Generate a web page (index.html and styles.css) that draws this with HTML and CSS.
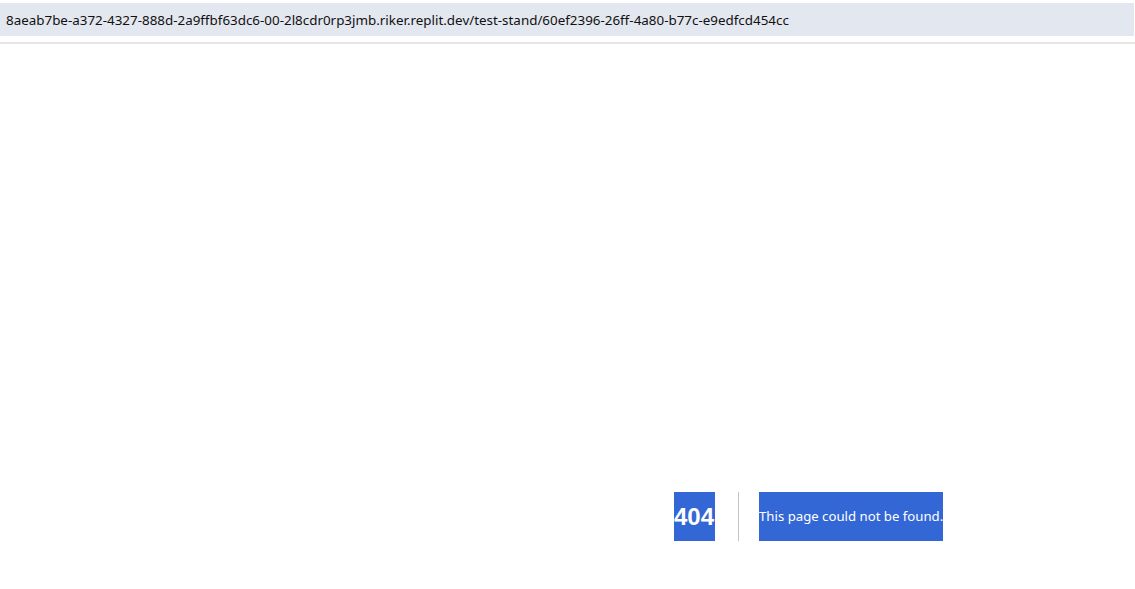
FILE: index.html
```html
<!DOCTYPE html>
<html>
<head>
<meta charset="utf-8">
<link rel="stylesheet" href="styles.css">
</head>
<body>
<div class="urlbar">8aeab7be-a372-4327-888d-2a9ffbf63dc6-00-2l8cdr0rp3jmb.riker.replit.dev/test-stand/60ef2396-26ff-4a80-b77c-e9edfcd454cc</div>
<div class="rule"></div>
<main class="page">
  <div class="error">
    <h1 class="code"><span class="sel">404</span></h1>
    <div class="msg"><h2 class="text"><span class="sel">This page could not be found.</span></h2></div>
  </div>
</main>
</body>
</html>
```
FILE: styles.css
```css
html, body {
  margin: 0;
  padding: 0;
  background: #ffffff;
}
body {
  font-family: "Noto Sans", "Open Sans", sans-serif;
  color: #000;
}
.urlbar {
  margin-top: 3px;
  height: 33px;
  line-height: 34px;
  background: #e3e7ef;
  font-size: 13.4px;
  padding-left: 6px;
  color: #111;
  white-space: nowrap;
  overflow: hidden;
  margin-right: 1px;
}
.rule {
  margin-top: 6px;
  height: 2px;
  background: #e6e6e6;
}
.page {
  padding-top: 448px;
  padding-left: 674px;
}
.error {
  display: flex;
  align-items: stretch;
  height: 49px;
}
.code {
  margin: 0 20px 0 0;
  padding: 0 23px 0 0;
  border-right: 1px solid #c4c4c4;
  font-size: 24px;
  font-weight: 700;
  line-height: 49px;
  display: flex;
}
.msg {
  display: flex;
}
.text {
  margin: 0;
  font-size: 13.2px;
  font-weight: 400;
  line-height: 49px;
  display: flex;
}
.sel {
  background: #3367d6;
  color: #fff;
  display: block;
  height: 49px;
}
.code .sel {
  font-family: "Liberation Sans", Arial, sans-serif;
  width: 41px;
}
```
